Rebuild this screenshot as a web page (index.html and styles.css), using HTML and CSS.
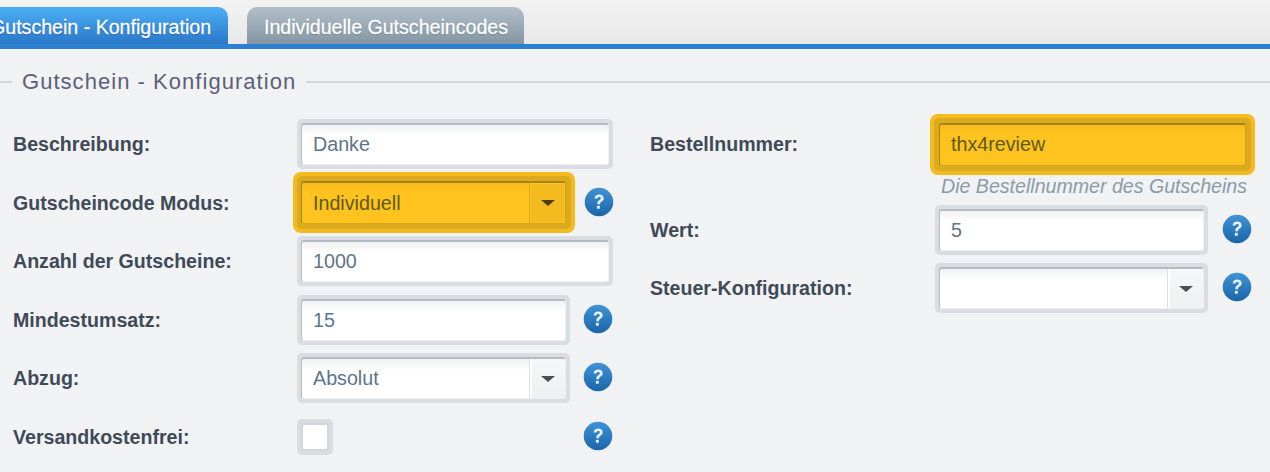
FILE: index.html
```html
<!DOCTYPE html>
<html lang="de">
<head>
<meta charset="utf-8">
<title>Gutschein - Konfiguration</title>
<link rel="stylesheet" href="styles.css">
</head>
<body>
<svg class="defs" width="0" height="0" aria-hidden="true">
  <defs>
    <linearGradient id="hg" x1="0" y1="0" x2="0" y2="1">
      <stop offset="0" stop-color="#3f93d6"/>
      <stop offset="1" stop-color="#1a65a8"/>
    </linearGradient>
    <symbol id="help" viewBox="0 0 30 30">
      <circle cx="15" cy="15" r="14.3" fill="url(#hg)"/>
      <path d="M10.6 11.6c.2-2.7 2-4.1 4.6-4.1 2.700 0 4.500 1.500 4.500 3.700 0 1.700-.9 2.600-2.100 3.400-1.100.8-1.500 1.200-1.500 2.600h-2.800c0-2.100.6-3 1.900-3.900 1-.7 1.600-1.200 1.600-2 0-.9-.6-1.400-1.600-1.400-1.100 0-1.700.6-1.800 1.700z" fill="#e6eff8"/>
      <rect x="12.900" y="18.800" width="2.900" height="2.900" fill="#e6eff8"/>
    </symbol>
  </defs>
</svg>
<header class="tabbar">
  <nav class="tabs">
    <div class="tab tab-active">Gutschein - Konfiguration</div>
    <div class="tab tab-idle">Individuelle Gutscheincodes</div>
  </nav>
</header>
<main class="panel">
  <div class="legend"><span class="legend-text">Gutschein - Konfiguration</span></div>
  <div class="columns">
    <section class="col col-left">
      <div class="row">
        <label class="label">Beschreibung:</label>
        <div class="frame w-full"><div class="field">Danke</div></div>
      </div>
      <div class="row">
        <label class="label">Gutscheincode Modus:</label>
        <div class="hl"><div class="frame w-short"><div class="field"><span class="value">Individuell</span><span class="trigger"><i class="arrow"></i></span></div></div></div>
        <svg class="help"><use href="#help"/></svg>
      </div>
      <div class="row">
        <label class="label">Anzahl der Gutscheine:</label>
        <div class="frame w-full"><div class="field">1000</div></div>
      </div>
      <div class="row">
        <label class="label">Mindestumsatz:</label>
        <div class="frame w-short"><div class="field">15</div></div>
        <svg class="help"><use href="#help"/></svg>
      </div>
      <div class="row">
        <label class="label">Abzug:</label>
        <div class="frame w-short"><div class="field"><span class="value">Absolut</span><span class="trigger"><i class="arrow"></i></span></div></div>
        <svg class="help"><use href="#help"/></svg>
      </div>
      <div class="row">
        <label class="label">Versandkostenfrei:</label>
        <div class="frame frame-check"><div class="check"></div></div>
        <svg class="help help-far"><use href="#help"/></svg>
      </div>
    </section>
    <section class="col col-right">
      <div class="row">
        <label class="label label-right">Bestellnummer:</label>
        <div class="hl"><div class="frame w-right-hl"><div class="field">thx4review</div></div></div>
      </div>
      <div class="hint">Die Bestellnummer des Gutscheins</div>
      <div class="row">
        <label class="label label-right">Wert:</label>
        <div class="frame w-right"><div class="field">5</div></div>
        <svg class="help"><use href="#help"/></svg>
      </div>
      <div class="row">
        <label class="label label-right">Steuer-Konfiguration:</label>
        <div class="frame w-right"><div class="field"><span class="value"></span><span class="trigger"><i class="arrow"></i></span></div></div>
        <svg class="help"><use href="#help"/></svg>
      </div>
    </section>
  </div>
</main>
</body>
</html>
```
FILE: styles.css
```css
* { box-sizing: border-box; }
html, body { margin: 0; height: 472px; overflow: hidden; }
body { background: #f1f2f4; font-family: "Liberation Sans", Arial, sans-serif; }
.defs { position: absolute; }

.tabbar {
  height: 49px;
  background: linear-gradient(#f3f3f3, #e8e8e8);
  border-bottom: 5px solid #2b80d0;
}
.tabs { display: flex; gap: 19px; padding-top: 7px; margin-left: -26px; }
.tab {
  height: 37px;
  border-radius: 10px 10px 0 0;
  color: #fff;
  font-size: 19.600px;
  line-height: 40px;
  white-space: nowrap;
  -webkit-text-stroke: 0.3px #fff;
}
.tab-active {
  width: 254px;
  padding-left: 16px;
  background: linear-gradient(#4caff5, #2a78c8);
  text-shadow: 0 1px 1px #1450b0;
}
.tab-idle {
  width: 277px;
  padding-left: 17px;
  background: linear-gradient(#b2bfc8, #8496a4);
  text-shadow: 0 1px 1px #6a7a88;
}

.panel { padding-top: 20px; }
.legend {
  height: 25px;
  padding-left: 12px;
  display: flex;
  align-items: center;
  background: linear-gradient(#d3d7dd, #d3d7dd) left 12px / 100% 2px no-repeat;
}
.legend-text {
  background: #f1f2f4;
  padding: 0 10px 0 10px;
  color: #5b6178;
  font-size: 22px;
  letter-spacing: 1.040px;
  line-height: 25px;
}

.columns { display: flex; padding-top: 21px; }
.col-left { width: 650px; padding-left: 13px; }
.col-right { flex: 1; }
.row { display: flex; align-items: center; height: 58.500px; }
.label {
  flex: none;
  width: 284px;
  padding-top: 1px;
  color: #3f4a58;
  font-size: 19.600px;
  font-weight: bold;
}
.label-right { width: 285px; }

.frame {
  flex: none;
  height: 50px;
  padding: 4px;
  background: #d9dde1;
  border-radius: 5px;
}
.w-full { width: 316px; }
.w-short { width: 273px; }
.w-right { width: 273px; }
.hl {
  flex: none;
  margin-left: -4px;
  padding: 4px;
  background: #f3bb20;
  border-radius: 8px;
}
.col-right .hl { margin-left: -5px; }
.hl .frame { background: #dcaa1e; height: 53px; padding: 5px 5px 5px 4px; }
.hl .w-short { width: 274px; }
.hl .w-right-hl { width: 317px; padding: 5px; }
.hl .field {
  background: linear-gradient(#f9bd20, #ffc31f 25%);
  border-color: #a8851c #cfa01c #d6a51c #a8851c;
  color: #5e5a10;
}
.hl .trigger { border-left-color: #d9a81d; background: #f3bb20; box-shadow: inset 0 0 0 1px #ffc31f; }
.hl .arrow { border-top-color: #4a4212; }

.field {
  display: flex;
  align-items: center;
  height: 100%;
  padding-left: 11px;
  background: linear-gradient(#f0f1f2, #fff 28%);
  border: 1px solid #b4bbc2;
  border-top-width: 2px;
  border-right: 1px solid #eef0f2;
  border-bottom: 1px solid #eef0f2;
  border-radius: 3px;
  color: #5d7689;
  font-size: 19.700px;
}
.value { flex: 1; }
.trigger {
  flex: none;
  align-self: stretch;
  width: 36px;
  display: flex;
  align-items: center;
  justify-content: center;
  border-left: 1px solid #dde0e3;
  background: linear-gradient(#f6f7f8, #eef0f1);
  box-shadow: inset 2px 0 0 #fff;
}
.arrow {
  width: 0;
  height: 0;
  border-left: 7px solid transparent;
  border-right: 7px solid transparent;
  border-top: 6px solid #4b4f56;
}

.frame-check { width: 36px; height: 36px; }
.check {
  height: 100%;
  background: #fff;
  border: 2px solid #d2d6da;
  border-radius: 3px;
}

.help { flex: none; width: 30px; height: 30px; margin-left: 14px; margin-top: -2px; }
.col-left .help { margin-left: 13px; }
.col-left .hl + .help { margin-left: 9px; }
.col-left .help-far { margin-left: 250px; }

.hint {
  margin: 1px 0 4px;
  padding-right: 23px;
  text-align: right;
  color: #8b9ba8;
  font-size: 19.600px;
  font-style: italic;
  line-height: 22px;
}
```
